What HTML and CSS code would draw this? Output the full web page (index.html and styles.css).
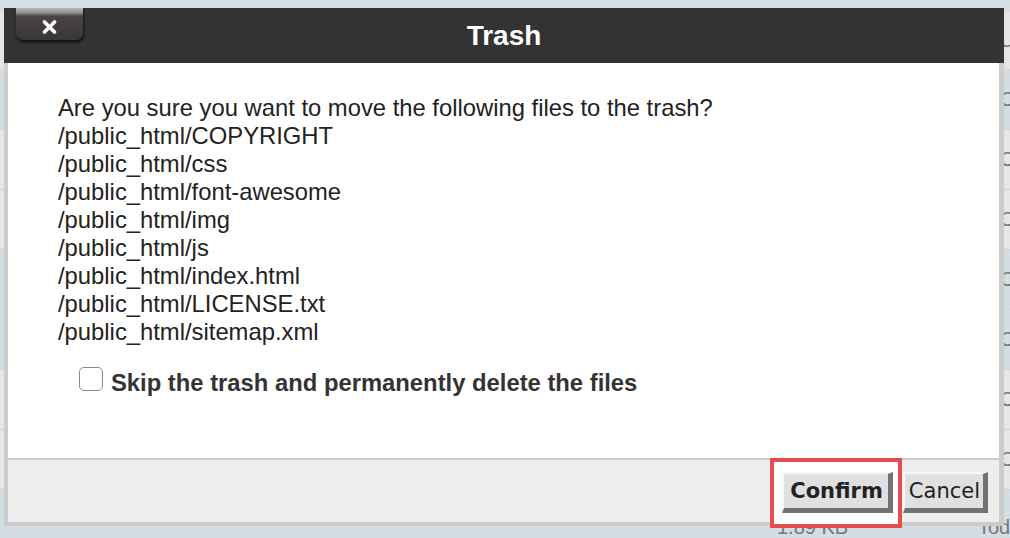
FILE: index.html
```html
<!DOCTYPE html>
<html>
<head>
    <title>Trash</title>
    <link rel="stylesheet" href="styles.css">
</head>
<body>
    <!-- the file list behind the dialog -->
    <div class="files">
        <div class="row head"><span class="size"></span><span class="date">Upd</span></div>
        <div class="row picked"><span class="size"></span><span class="date">Oct</span></div>
        <div class="row"><span class="size"></span><span class="date">Oct</span></div>
        <div class="row"><span class="size"></span><span class="date">Oct</span></div>
        <div class="row picked"><span class="size"></span><span class="date">Oct</span></div>
        <div class="row picked"><span class="size"></span><span class="date">Oct</span></div>
        <div class="row"><span class="size"></span><span class="date">Oct</span></div>
        <div class="row"><span class="size"></span><span class="date">Oct</span></div>
        <div class="row picked last"><span class="size">1.89 KB</span><span class="date">Today</span></div>
    </div>

    <!-- the trash dialog -->
    <div class="dialog">
        <div class="dialog-head">
            <button class="close" title="Close">
                <svg width="15" height="14" viewBox="0 0 15 14">
                    <path d="M2.5 2 L12.5 12 M12.5 2 L2.5 12" stroke="#fff" stroke-width="3.6" stroke-linecap="round"/>
                </svg>
            </button>
            <h1>Trash</h1>
        </div>
        <div class="dialog-body">
            <p class="question">
                Are you sure you want to move the following files to the trash?<br>
                /public_html/COPYRIGHT<br>
                /public_html/css<br>
                /public_html/font-awesome<br>
                /public_html/img<br>
                /public_html/js<br>
                /public_html/index.html<br>
                /public_html/LICENSE.txt<br>
                /public_html/sitemap.xml
            </p>
            <label class="skip"><input type="checkbox"><span>Skip the trash and permanently delete the files</span></label>
        </div>
        <div class="dialog-foot">
            <span class="mark-wrap">
                <span class="mark"></span>
                <button class="btn confirm">Confirm</button>
            </span>
            <button class="btn">Cancel</button>
        </div>
    </div>
</body>
</html>
```

FILE: styles.css
```css
/* page behind the dialog */
body {
    margin: 0;
    background: #d5dee3;
    font-family: "Liberation Sans", Arial, sans-serif;
    overflow: hidden;
}

.files {
    padding-top: 12px;
}

.row {
    box-sizing: border-box;
    display: grid;
    grid-template-columns: 777px 201px 1fr;
    align-items: center;
    height: 60px;
    background: #e6e6e6;
    border-bottom: 1px solid #d2d2d2;
    font-size: 20px;
    color: #777;
}
.row .size {
    grid-column: 2;
}
.row .date {
    grid-column: 3;
    padding-left: 22px;
}
.row.head {
    height: 58px;
}
.row.picked {
    background: #d3dde4;
}
.row.last {
    height: 76px;
}
.row.last .date {
    padding-left: 0;
}

/* the dialog box */
.dialog {
    position: absolute;
    left: 4px;
    top: 8px;
    width: 1000px;
    box-sizing: border-box;
}

.dialog-head {
    display: grid;
    grid-template-columns: 1fr auto 1fr;
    height: 55px;
    background: #333;
}
.dialog-head h1 {
    grid-column: 2;
    margin: 0;
    align-self: center;
    color: #fff;
    font-size: 28px;
    font-weight: bold;
}

.close {
    grid-column: 1;
    grid-row: 1;
    justify-self: start;
    align-self: start;
    display: flex;
    align-items: center;
    justify-content: center;
    width: 67px;
    height: 32px;
    margin-left: 12px;
    padding: 5px 0 0;
    border: 0;
    border-radius: 0 0 7px 7px;
    background: linear-gradient(#b8b8b8 0, #8d8a8a 5px, #4a4444 8px, #3b3636 100%);
    box-shadow: 1px 2px 2px #151515, 0 3px 2px #1b2a30;
}

.dialog-body {
    height: 395px;
    box-sizing: border-box;
    background: #fff;
    border-left: 4px solid #ccc;
    border-right: 5px solid #ccc;
    padding: 31px 0 0 50px;
    color: #222;
}

.question {
    margin: 0;
    font-size: 23.8px;
    line-height: 28px;
}

.skip {
    display: flex;
    align-items: center;
    margin: 23px 0 0 21px;
    font-size: 23.8px;
    line-height: 28px;
    font-weight: bold;
    color: #333;
}
.skip input {
    appearance: none;
    -webkit-appearance: none;
    width: 24px;
    height: 24px;
    margin: -8px 8px 0 0;
    border: 1.5px solid #8a8a8a;
    border-radius: 5px;
    background: #fff;
}

.dialog-foot {
    display: flex;
    justify-content: flex-end;
    align-items: flex-start;
    gap: 10px;
    height: 62px;
    padding: 0 11px 0 0;
    box-sizing: content-box;
    background: #eee;
    border: 4px solid #ccc;
    border-top: 2px solid #ccc;
    border-right-width: 5px;
}

/* buttons */
.btn {
    position: relative;
    z-index: 1;
    margin-top: 12px;
    padding: 5px 3px 5px 4px;
    font-family: "DejaVu Sans", Verdana, sans-serif;
    font-size: 21px;
    line-height: 24px;
    color: #222;
    background: #e0e0e0;
    border-style: solid;
    border-width: 2px 5px 5px 2px;
    border-color: #f8f8f8 #727272 #727272 #f8f8f8;
}
.confirm {
    font-weight: bold;
    padding: 5px 5px 5px 6px;
}

/* red highlight round the confirm button */
.mark-wrap {
    position: relative;
    display: flex;
}
.mark {
    position: absolute;
    top: -2px;
    left: -12px;
    right: -9px;
    bottom: -15px;
    border: 4px solid #e84b4b;
    background: #fff;
}
```
